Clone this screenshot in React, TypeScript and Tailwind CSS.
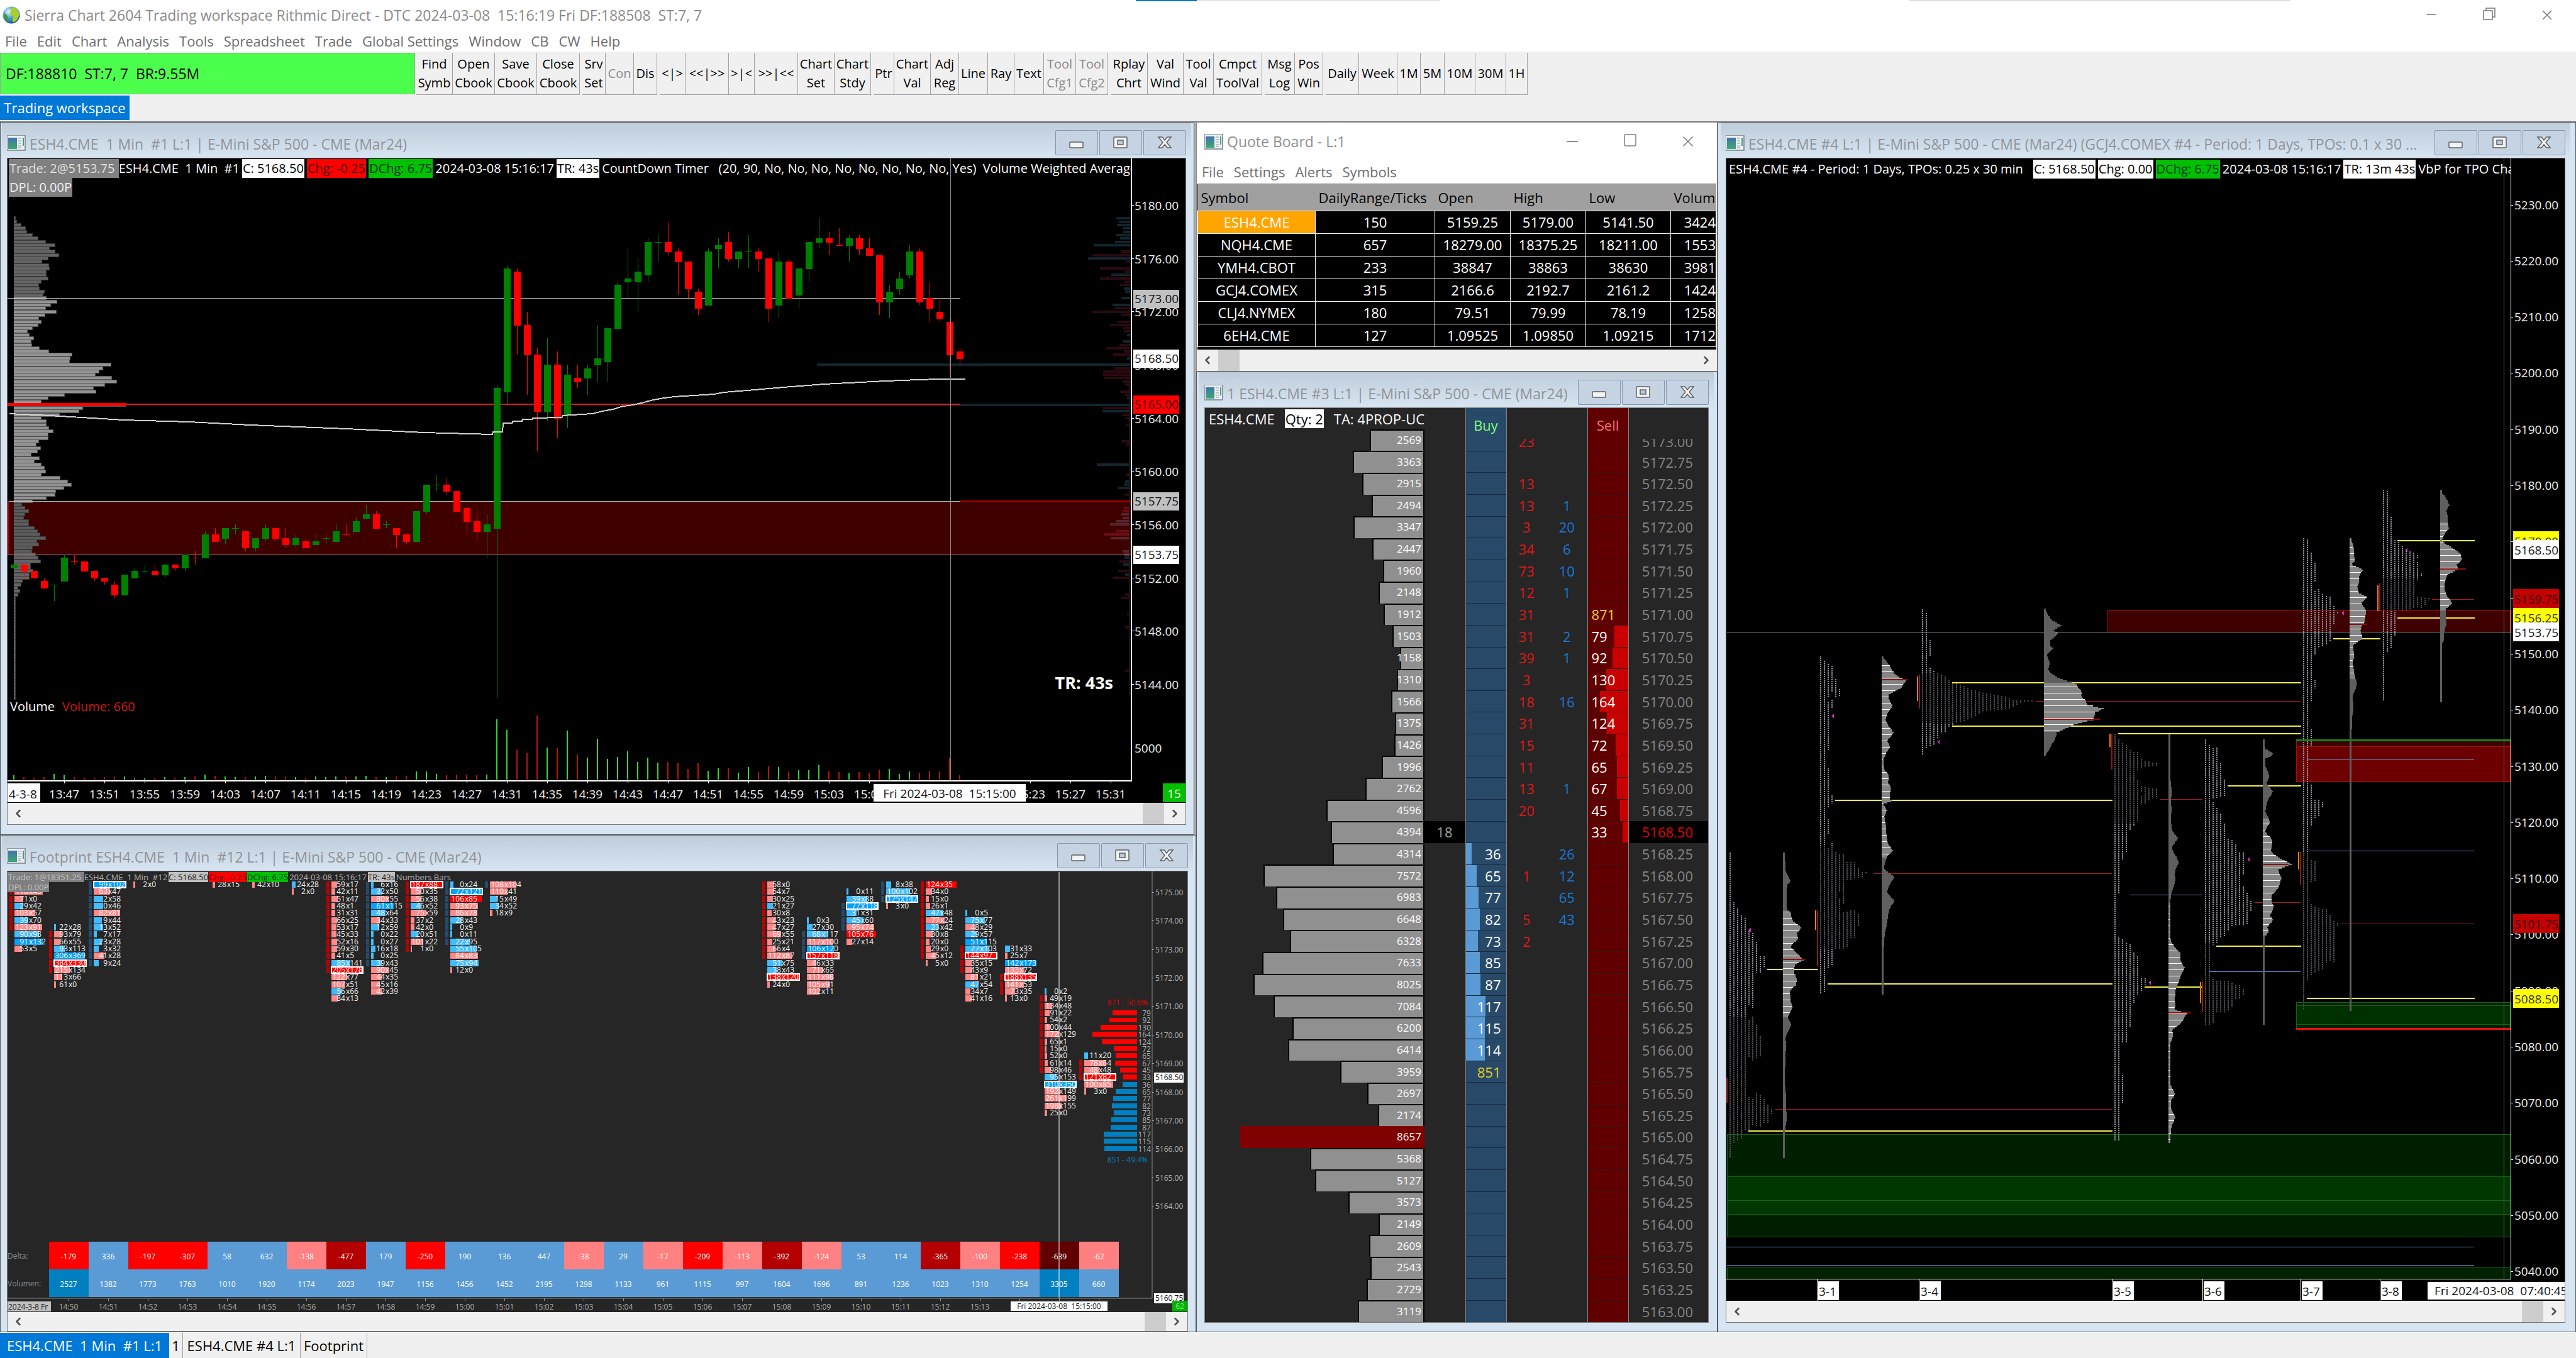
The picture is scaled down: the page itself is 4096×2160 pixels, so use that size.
import React from 'react';
import { ChevronLeft, ChevronRight, Minus, Square, X } from 'lucide-react';

/* ---------- shared chrome ---------- */

const WindowIcon: React.FC = () => (
  <svg viewBox="0 0 30 25" className="w-[30px] h-[25px] shrink-0" aria-hidden="true">
    <defs>
      <linearGradient id="winIcon" x1="0" y1="0" x2="0" y2="1">
        <stop offset="0" stopColor="#3f74a8" />
        <stop offset="1" stopColor="#3fa876" />
      </linearGradient>
    </defs>
    <rect x="0" y="0" width="30" height="25" fill="#8b98a5" />
    <rect x="1" y="1" width="27" height="22" fill="#eef1f3" />
    <rect x="2" y="4" width="14" height="18" fill="url(#winIcon)" />
    <path d="M18 5h5M18 9h5M18 13h5M18 17h5M18 20h5" stroke="#a9b3bb" strokeWidth="1.5" />
    <rect x="25" y="4" width="2" height="13" fill="#4f9a8a" />
  </svg>
);

const CaptionButton: React.FC<{ label: string; children: React.ReactNode }> = ({ label, children }) => (
  <button
    aria-label={label}
    className="w-[68px] h-10 flex items-center justify-center border border-[#8397b0] rounded-xs bg-[#c6d3e3]"
  >
    {children}
  </button>
);

const CaptionButtons: React.FC = () => (
  <div className="flex gap-[2px] shrink-0">
    <CaptionButton label="Minimize">
      <svg viewBox="0 0 24 24" className="w-6 h-6">
        <rect x="1" y="11" width="21" height="9" rx="1" fill="#f4f4f4" stroke="#5c6066" strokeWidth="1.5" />
      </svg>
    </CaptionButton>
    <CaptionButton label="Maximize">
      <svg viewBox="0 0 24 24" className="w-6 h-6">
        <rect x="1" y="3" width="21" height="17" rx="1" fill="#f4f4f4" stroke="#5c6066" strokeWidth="1.5" />
        <rect x="7" y="8" width="9" height="7" fill="#b9c9dc" stroke="#5c6066" strokeWidth="1.5" />
      </svg>
    </CaptionButton>
    <CaptionButton label="Close">
      <svg viewBox="0 0 24 24" className="w-6 h-6">
        <path
          d="M2 3h6l4 5 4-5h6l-7 8.500 7 8.500h-6l-4-5-4 5H2l7-8.500z"
          fill="#f4f4f4"
          stroke="#5c6066"
          strokeWidth="1.5"
        />
      </svg>
    </CaptionButton>
  </div>
);

const ScrollBar: React.FC<{ height: string; thumb: 'start' | 'end' }> = ({ height, thumb }) => (
  <div className={`${height} shrink-0 flex bg-[#f0f0f0] text-[#505050]`}>
    <button aria-label="Scroll left" className="w-[34px] flex items-center justify-center">
      <ChevronLeft size={20} strokeWidth={3} />
    </button>
    <div className={`flex-1 flex ${thumb === 'end' ? 'justify-end' : 'justify-start'}`}>
      <div className="w-[34px] bg-[#cdcdcd]" />
    </div>
    <button aria-label="Scroll right" className="w-[34px] flex items-center justify-center">
      <ChevronRight size={20} strokeWidth={3} />
    </button>
  </div>
);

interface WindowProps {
  title: string;
  pad: string;
  className?: string;
  children: React.ReactNode;
}

const ChartWindow: React.FC<WindowProps> = ({ title, pad, className = '', children }) => (
  <section
    className={`flex flex-col min-w-0 min-h-0 border border-[#55585c] bg-[#d7e4f2] ${pad} ${className}`}
  >
    <header className="h-14 pt-2 shrink-0 flex items-center gap-[6px] -mx-2 px-2 bg-linear-to-b from-[#bfcddb] to-[#d7e4f2]">
      <WindowIcon />
      <h2 className="flex-1 min-w-0 pt-1 truncate whitespace-pre text-[23px] text-[#8f9499]">{title}</h2>
      <CaptionButtons />
    </header>
    <div className="flex-1 min-h-0 flex flex-col border border-[#77797c] relative overflow-hidden">{children}</div>
  </section>
);

/* ---------- top of the application ---------- */

const MENU = ['File', 'Edit', 'Chart', 'Analysis', 'Tools', 'Spreadsheet', 'Trade', 'Global Settings', 'Window', 'CB', 'CW', 'Help'];

const TOOL_GROUPS: [string, string, boolean?][][] = [
  [['Find\nSymb', 'w-[58px]'], ['Open\nCbook', 'w-[67px]'], ['Save\nCbook', 'w-[67px]'], ['Close\nCbook', 'w-[68px]']],
  [['Srv\nSet', 'w-[37px]'], ['Con', 'w-[45px]', true], ['Dis', 'w-[37px]']],
  [['<|>', 'w-[41px]'], ['<<|>>', 'w-[69px]'], ['>|<', 'w-[41px]'], ['>>|<<', 'w-[69px]'], ['Chart\nSet', 'w-[58px]'], ['Chart\nStdy', 'w-[58px]']],
  [['Ptr', 'w-[33px]'], ['Chart\nVal', 'w-[58px]'], ['Adj\nReg', 'w-[45px]'], ['Line', 'w-[46px]'], ['Ray', 'w-[42px]'], ['Text', 'w-[47px]'], ['Tool\nCfg1', 'w-[51px]', true], ['Tool\nCfg2', 'w-[51px]', true]],
  [['Rplay\nChrt', 'w-[59px]'], ['Val\nWind', 'w-[57px]'], ['Tool\nVal', 'w-[48px]'], ['Cmpct\nToolVal', 'w-[77px]']],
  [['Msg\nLog', 'w-[48px]'], ['Pos\nWin', 'w-[45px]']],
  [['Daily', 'w-[53px]'], ['Week', 'w-[61px]'], ['1M', 'w-[37px]'], ['5M', 'w-[38px]'], ['10M', 'w-[49px]'], ['30M', 'w-[49px]'], ['1H', 'w-[34px]']],
];

const TitleBar: React.FC = () => (
  <header className="h-12 shrink-0 flex items-center bg-white relative">
    <svg viewBox="0 0 30 30" className="w-[30px] h-[30px] ml-[3px]" aria-hidden="true">
      <defs>
        <radialGradient id="globe" cx="0.35" cy="0.3" r="0.8">
          <stop offset="0" stopColor="#e8f6ff" />
          <stop offset="0.45" stopColor="#4fa3d9" />
          <stop offset="1" stopColor="#0c3f86" />
        </radialGradient>
      </defs>
      <circle cx="15" cy="15" r="13.500" fill="url(#globe)" />
      <path d="M13 3c6-2 12 2 14 8 1 6-2 12-7 15-4 1-4-4-2-7 1-3-5-3-5-7s4-4 2-6-4-1-2-3z" fill="#a9cf2c" />
      <path d="M3 13c2-1 5 1 6 4s1 6 2 9c-5-2-8-7-8-13z" fill="#3f9a35" />
    </svg>
    <h1 className="ml-[6px] flex-1 whitespace-pre text-[23px] text-[#8a8a8a]">
      {'Sierra Chart 2604 Trading workspace Rithmic Direct - DTC 2024-03-08  15:16:19 Fri DF:188508  ST:7, 7'}
    </h1>
    <div className="flex text-[#777]">
      <button aria-label="Minimize application" className="w-[92px] flex justify-center"><Minus size={24} strokeWidth={1.5} /></button>
      <button aria-label="Restore application" className="w-[92px] flex justify-center">
        <svg viewBox="0 0 22 22" className="w-[22px] h-[22px]" fill="none" stroke="currentColor" strokeWidth="1.5">
          <rect x="2" y="6" width="14" height="14" />
          <path d="M6 6V2h14v14h-4" />
        </svg>
      </button>
      <button aria-label="Close application" className="w-[92px] flex justify-center"><X size={26} strokeWidth={1.5} /></button>
    </div>
    {/* other windows peeking from behind the top edge */}
    <div className="absolute top-0 left-[44.1%] w-[11.8%] h-[2px] flex">
      <div className="w-1/5 bg-[#0078d7]" />
      <div className="flex-1 bg-[#e3e3e3]" />
    </div>
    <div className="absolute top-0 left-[74.1%] w-[14.800%] h-[2px] bg-[#dedede]" />
  </header>
);

const Toolbar: React.FC = () => (
  <div className="h-[70px] shrink-0 flex items-stretch bg-[#f0f0f0] pt-[2px] pb-px">
    <div className="w-[660px] mb-px mr-[2px] px-2 flex items-center border border-[#a0a0a0] bg-[#4dff4d] whitespace-pre text-[23px]">
      {'DF:188810  ST:7, 7  BR:9.55M'}
    </div>
    <div className="flex gap-1">
      {TOOL_GROUPS.map((group, g) => (
        <div key={g} className="flex border-b border-[#a0a0a0]">
          {group.map(([label, width, disabled]) => (
            <button
              key={label}
              disabled={disabled}
              className={`${width} flex items-center justify-center border-r border-[#a0a0a0] whitespace-pre text-center text-[20px] leading-[30px] text-black disabled:text-[#8a8a8a]`}
            >
              {label}
            </button>
          ))}
        </div>
      ))}
    </div>
  </div>
);

/* ---------- one minute chart ---------- */

// up/down, body top, body bottom, high, low in ticks over 5153.75, volume height
type Candle = [number, number, number, number, number, number];
const CANDLES: Candle[] = [
  [1, -3, -4, -3, -4, 7], [0, -3, -5, -3, -7, 4], [0, -5, -7, -5, -7, 3], [0, -8, -10, -7, -10, 4], [1, -9, -9, -9, -14, 9],
  [1, -1, -8, 0, -8, 7], [0, -2, -2, 0, -3, 4], [0, -2, -5, -2, -5, 3], [0, -5, -7, -5, -8, 3], [0, -7, -8, -7, -9, 4],
  [0, -9, -12, -8, -13, 4], [1, -6, -12, -6, -12, 5], [1, -5, -7, -4, -7, 2], [1, -5, -5, -3, -6, 2], [0, -5, -6, -3, -6, 3],
  [1, -3, -6, -3, -7, 4], [0, -3, -4, -3, -5, 3], [1, 0, -4, 0, -5, 4], [0, -1, -1, 1, -3, 5], [1, 6, -1, 7, -1, 8],
  [0, 6, 4, 8, 4, 6], [1, 8, 5, 8, 3, 5], [1, 8, 8, 9, 6, 4], [0, 7, 2, 7, 1, 4], [1, 5, 2, 5, 1, 5],
  [1, 8, 5, 9, 4, 6], [0, 8, 5, 8, 4, 5], [0, 5, 3, 8, 2, 4], [1, 5, 3, 6, 2, 4], [0, 4, 2, 5, 2, 3],
  [1, 4, 3, 6, 3, 5], [1, 5, 5, 6, 3, 4], [1, 7, 4, 9, 4, 5], [0, 6, 6, 9, 6, 5], [1, 10, 7, 11, 7, 5],
  [1, 12, 11, 15, 11, 6], [0, 12, 8, 13, 8, 4], [1, 9, 9, 10, 8, 4], [0, 8, 6, 8, 2, 5], [0, 6, 4, 6, 3, 6],
  [1, 13, 4, 13, 4, 13], [1, 21, 13, 21, 12, 13], [1, 21, 21, 24, 19, 9], [0, 21, 19, 23, 18, 7], [0, 19, 13, 19, 13, 7],
  [0, 14, 10, 14, 6, 8], [0, 10, 7, 13, 4, 7], [1, 9, 7, 12, -1, 8], [1, 50, 8, 51, -43, 96], [1, 86, 49, 87, 45, 79],
  [0, 85, 69, 86, 60, 47], [0, 69, 60, 73, 48, 42], [0, 60, 43, 62, 31, 102], [1, 57, 43, 65, 40, 51], [0, 57, 41, 61, 35, 50],
  [1, 54, 42, 57, 38, 78], [0, 53, 52, 57, 50, 40], [1, 56, 53, 57, 48, 35], [1, 59, 57, 69, 52, 65], [1, 68, 58, 68, 52, 33],
  [1, 81, 68, 82, 67, 36], [1, 83, 82, 92, 77, 45], [1, 85, 82, 89, 73, 28], [1, 94, 84, 95, 82, 35], [1, 94, 94, 96, 88, 27],
  [0, 94, 91, 100, 90, 28], [0, 91, 88, 92, 78, 26], [0, 88, 80, 88, 77, 17], [0, 79, 74, 80, 72, 26], [1, 91, 75, 92, 75, 14],
  [1, 93, 92, 95, 86, 18], [0, 94, 89, 97, 88, 18], [1, 91, 89, 91, 86, 11], [1, 91, 91, 96, 86, 20], [0, 91, 89, 92, 85, 12],
  [0, 89, 74, 89, 70, 21], [1, 88, 75, 91, 71, 20], [0, 88, 77, 89, 77, 12], [1, 86, 78, 86, 74, 15], [1, 94, 86, 94, 82, 15],
  [1, 95, 94, 101, 92, 23], [0, 95, 94, 97, 90, 13], [0, 93, 93, 98, 93, 12], [1, 95, 93, 96, 88, 10], [0, 95, 92, 96, 90, 12],
  [0, 92, 90, 95, 90, 11], [0, 90, 76, 90, 72, 16], [1, 79, 76, 81, 71, 17], [1, 83, 80, 85, 78, 9], [1, 91, 84, 93, 83, 13],
  [0, 91, 76, 92, 75, 11], [0, 77, 74, 82, 70, 14], [0, 73, 71, 77, 70, 13], [0, 70, 60, 71, 54, 34], [0, 61, 59, 62, 57, 7],
];

const VBP = [
  2, 4, 11, 18, 20, 29, 38, 50, 65, 56, 65, 71, 54, 44, 55, 56, 51, 51, 54, 43, 39, 40, 48, 46, 51, 68, 58, 50, 67, 49,
  39, 43, 38, 29, 21, 24, 31, 27, 28, 40, 55, 92, 89, 88, 154, 141, 135, 129, 155, 163, 144, 126, 130, 80, 54, 43, 178,
  109, 103, 72, 43, 51, 51, 55, 62, 54, 54, 39, 35, 42, 37, 27, 40, 32, 43, 48, 50, 43, 73, 85, 91, 79, 66, 65, 51, 29,
  12, 17, 23, 17, 15, 23, 23, 32, 37, 41, 50, 36, 39, 29, 28, 34, 38, 42, 26, 26, 30, 24, 24, 13, 11, 6, 9, 6, 2, 2, 2,
  2, 2, 2, 2, 2, 2, 2, 2, 2, 2, 2, 2, 2, 2, 2, 2, 2, 2, 2, 2, 2, 2, 2, 2, 2, 2, 2, 2,
];

// tick, width, 1 = bid side
const DEPTH: [number, number, number][] = [
  [101, 22, 1], [100, 18, 1], [99, 21, 1], [98, 11, 1], [97, 12, 1], [96, 23, 1], [95, 16, 1], [94, 24, 1], [93, 57, 1],
  [91, 15, 0], [90, 60, 0], [89, 67, 1], [88, 7, 0], [86, 48, 0], [85, 8, 0], [84, 30, 1], [83, 48, 0], [82, 9, 0],
  [81, 16, 0], [80, 10, 1], [79, 8, 1], [77, 14, 1], [75, 28, 1], [74, 24, 0], [73, 61, 0], [72, 14, 0], [70, 20, 0],
  [69, 32, 0], [68, 12, 0], [67, 10, 0], [66, 5, 1], [64, 11, 1], [63, 17, 0], [62, 38, 0], [61, 10, 0], [60, 27, 0],
  [59, 5, 1], [57, 498, 1], [56, 25, 0], [55, 43, 0], [54, 43, 0], [53, 41, 0], [52, 12, 0], [51, 8, 0], [49, 16, 0],
  [48, 8, 0], [47, 5, 1], [45, 757, 1], [44, 44, 0], [43, 44, 1], [42, 13, 0], [41, 6, 0], [39, 7, 0], [34, 14, 0],
  [33, 7, 0], [27, 53, 1], [24, 6, 0], [22, 8, 1], [21, 10, 1], [20, 19, 1], [18, 9, 0], [14, 10, 2], [13, 12, 2],
  [12, 14, 3], [11, 12, 3], [10, 22, 3], [9, 32, 3], [7, 23, 2], [6, 41, 2], [5, 31, 3], [1, 12, 3], [0, 9, 3],
  [-1, 9, 1], [-2, 17, 0], [-3, 11, 1], [-5, 19, 0], [-6, 8, 1], [-7, 28, 0], [-12, 8, 0], [-13, 14, 0], [-18, 5, 0],
  [-22, 8, 0], [-35, 8, 0],
];
const DEPTH_FILL = ['#2a0a10', '#13252e', '#6b0c14', '#57262c'];

const VWAP =
  '15,658 80,661 196,668 300,671 398,676 551,682 674,688 783,691 784,687 799,687 800,673 814,673 816,670 830,670 831,667 846,667 847,665 893,664 895,661 925,659 942,658 958,654 975,651 991,646 1007,644 1024,640 1039,636 1056,633 1072,631 1087,630 1135,627 1151,624 1200,620 1246,616 1310,611 1369,608 1408,606 1460,604 1494,603 1535,603';

const tickY = (t: number) => 882 - t * 5.2925;

const PriceTag: React.FC<{ x: number; y: number; w: number; h: number; bg: string; fg: string; text: string }> = ({ x, y, w, h, bg, fg, text }) => (
  <g>
    <rect x={x} y={y - h / 2} width={w} height={h} fill={bg} />
    <text x={x + 2} y={y + h / 4} fill={fg}>{text}</text>
  </g>
);

const MinuteChart: React.FC = () => {
  // labels under the cursor's date box are left out
  const times = Array.from({ length: 27 }, (_, i) => {
    const m = 13 * 60 + 47 + i * 4;
    return { x: 102 + i * 64, label: `${Math.floor(m / 60)}:${String(m % 60).padStart(2, '0')}` };
  }).filter(t => t.x < 1400 || t.x > 1620);
  return (
    <svg viewBox="12 252 1873 1025" preserveAspectRatio="none" className="block w-full flex-1 min-h-0 bg-black text-[19px]" shapeRendering="crispEdges">
      <rect x={13} y={797} width={1785} height={85} fill="#3f0000" />
      {VBP.map((w, i) => {
        const t = 101 - i;
        const poc = t === 45;
        const inside = t <= 77 && t >= 16;
        return (
          <g key={i}>
            <rect x={22} y={tickY(t) - 3} width={w + 1} height={6} fill={inside ? '#555' : '#3c3c3c'} />
            <rect x={22} y={tickY(t) - 2} width={w} height={4} fill={poc ? '#f00' : inside ? '#939393' : '#646464'} opacity={t < 16 && t > 0 ? 0.8 : 1} />
          </g>
        );
      })}
      {DEPTH.map(([t, w, side]) => (
        <rect key={t} x={1797 - w} y={tickY(t) - 2} width={w} height={4} fill={DEPTH_FILL[side]} />
      ))}
      <path d="M1796 600V1108" stroke="#1c1416" strokeWidth={2} />
      <path d="M12 474H1527M12 797H1527" stroke="#b8b8b8" strokeWidth={1} />
      <path d="M1527 797H1798M13 797V882" stroke="#a80000" strokeWidth={2} />
      <path d="M12 882H1798" stroke="#9c6e6e" strokeWidth={1} />
      <path d="M12 643H1527" stroke="#e01818" strokeWidth={2} />
      <path d="M12 643H200" stroke="#f00" strokeWidth={5} />
      {CANDLES.map(([up, top, bot, hi, lo, vol], i) => {
        const x = 22 + i * 16;
        const fill = up ? '#008000' : '#ff0000';
        return (
          <g key={i}>
            <rect x={x} y={tickY(hi)} width={1} height={tickY(lo) - tickY(hi)} fill={fill} />
            <rect x={x - 5} y={tickY(top)} width={11} height={Math.max(1, tickY(bot) - tickY(top) + (top === bot ? 0 : 1))} fill={fill} />
            <rect x={x - 1} y={1240 - vol} width={2} height={vol} fill={up ? '#37d637' : '#b81414'} />
          </g>
        );
      })}
      <polyline points={VWAP} fill="none" stroke="#cfcfcf" strokeWidth={2} />
      <path d="M1511 252V1242" stroke="#8a8a8a" strokeWidth={1} />
      <path d="M12 1242H1799V252" fill="none" stroke="#fff" strokeWidth={2} />
      {times.map(t => (
        <g key={t.label}>
          <rect x={t.x} y={1242} width={1} height={4} fill="#fff" />
          <text x={t.x} y={1270} textAnchor="middle" fill="#f2f2f2">{t.label}</text>
        </g>
      ))}
      {Array.from({ length: 10 }, (_, i) => 5180 - i * 4).map(p => (
        <g key={p}>
          <rect x={1799} y={326 + (5180 - p) * 21.17} width={4} height={1} fill="#fff" />
          <text x={1804} y={334 + (5180 - p) * 21.17} fill="#f2f2f2">{p.toFixed(2)}</text>
        </g>
      ))}
      <text x={1804} y={1197} fill="#f2f2f2">5000</text>
      <PriceTag x={1802} y={475} w={73} h={29} bg="#c0c0c0" fg="#111" text="5173.00" />
      <PriceTag x={1802} y={570} w={73} h={29} bg="#fff" fg="#111" text="5168.50" />
      <PriceTag x={1802} y={643} w={73} h={29} bg="#f00" fg="#400" text="5165.00" />
      <PriceTag x={1802} y={797} w={73} h={29} bg="#c0c0c0" fg="#111" text="5157.75" />
      <PriceTag x={1802} y={882} w={73} h={29} bg="#fff" fg="#111" text="5153.75" />
      <text x={16} y={1131} fill="#fff" className="text-[20px]">Volume</text>
      <text x={99} y={1131} fill="#d01818" className="text-[20px]">Volume: 660</text>
      <text x={1770} y={1096} textAnchor="end" fill="#fff" className="text-[27px] font-bold">TR: 43s</text>
      <rect x={12} y={1246} width={52} height={30} fill="#fff" />
      <text x={14} y={1270} fill="#111">4-3-8</text>
      <rect x={1389} y={1247} width={242} height={28} fill="#fff" />
      <text x={1510} y={1269} textAnchor="middle" fill="#111">{'Fri 2024-03-08\u00a0\u00a015:15:00'}</text>
      <rect x={1849} y={1246} width={36} height={30} fill="#00c000" />
      <text x={1867} y={1269} textAnchor="middle" fill="#fff">15</text>
    </svg>
  );
};

/* ---------- footprint chart ---------- */

// bid, ask, bar width, colour: p/b light, R/B strong, trailing o marks the point of control
type Cell = [number, number, number, string];
interface Bar { k: number; row: number; strip?: [string, number, number]; cells: Cell[] }

const BARS: Bar[] = [
  { k: -1, row: 1, strip: ['r', 1, 6], cells: [[118, 49, 45, 'p'], [71, 0, 14, 'p'], [29, 42, 14, 'b'], [103, 57, 33, 'p'], [39, 70, 22, 'b'], [123, 91, 44, 'p'], [90, 98, 39, 'b'], [91, 132, 45, 'B'], [53, 5, 12, 'p']] },
  { k: 0, row: 6, strip: ['r', 7, 12], cells: [[22, 28, 3, 'b'], [93, 79, 12, 'p'], [66, 55, 9, 'p'], [93, 113, 17, 'b'], [306, 369, 49, 'B'], [384, 330, 51, 'Ro'], [215, 134, 25, 'p'], [113, 66, 13, 'p'], [61, 0, 3, 'p']] },
  { k: 1, row: 0, strip: ['n', 0, 11], cells: [[99, 102, 51, 'Bo'], [63, 47, 26, 'p'], [2, 58, 15, 'b'], [0, 46, 15, 'b'], [82, 81, 42, 'p'], [9, 44, 13, 'b'], [13, 52, 15, 'b'], [7, 17, 5, 'b'], [23, 28, 13, 'b'], [3, 32, 8, 'b'], [41, 28, 17, 'p'], [9, 24, 8, 'b']] },
  { k: 2, row: 0, cells: [[2, 0, 3, 'p']] },
  { k: 4, row: 0, cells: [[28, 15, 4, 'p']] },
  { k: 5, row: 0, cells: [[42, 10, 4, 'p']] },
  { k: 6, row: 0, cells: [[24, 28, 6, 'b'], [2, 0, 3, 'p']] },
  { k: 7, row: 0, strip: ['r', 0, 12], cells: [[59, 17, 9, 'p'], [42, 11, 6, 'p'], [51, 47, 10, 'p'], [48, 1, 6, 'p'], [31, 31, 6, 'p'], [66, 25, 9, 'p'], [53, 17, 8, 'p'], [45, 33, 8, 'p'], [52, 16, 9, 'p'], [59, 30, 9, 'p'], [41, 5, 6, 'p'], [85, 141, 30, 'b'], [205, 178, 50, 'Ro'], [122, 77, 25, 'p'], [107, 51, 22, 'p'], [56, 66, 16, 'b'], [84, 13, 11, 'p']] },
  { k: 8, row: 0, strip: ['n', 0, 11], cells: [[6, 16, 4, 'b'], [32, 50, 17, 'b'], [80, 55, 28, 'p'], [61, 115, 36, 'B'], [48, 64, 23, 'b'], [34, 33, 14, 'p'], [12, 59, 13, 'b'], [0, 22, 4, 'b'], [0, 27, 4, 'b'], [16, 18, 7, 'b'], [0, 25, 4, 'b'], [39, 43, 17, 'b'], [90, 45, 28, 'p'], [44, 35, 17, 'p'], [45, 16, 14, 'p'], [42, 39, 17, 'p']] },
  { k: 9, row: 0, strip: ['r', 0, 9], cells: [[187, 88, 51, 'Ro'], [50, 35, 16, 'p'], [56, 38, 17, 'p'], [46, 52, 17, 'b'], [75, 59, 25, 'p'], [37, 2, 6, 'p'], [42, 0, 6, 'p'], [20, 51, 12, 'b'], [101, 22, 20, 'p'], [1, 0, 2, 'p']] },
  { k: 10, row: 0, strip: ['n', 0, 8], cells: [[0, 24, 5, 'b'], [72, 121, 51, 'Bo'], [106, 85, 50, 'R'], [93, 75, 44, 'p'], [86, 78, 43, 'p'], [28, 43, 18, 'b'], [0, 9, 3, 'b'], [0, 11, 3, 'b'], [22, 95, 31, 'b'], [55, 105, 42, 'b'], [84, 83, 44, 'p'], [75, 94, 45, 'b'], [12, 0, 3, 'p']] },
  { k: 11, row: 0, strip: ['n', 0, 0], cells: [[108, 104, 42, 'p'], [110, 41, 28, 'p'], [15, 49, 11, 'b'], [34, 52, 14, 'b'], [18, 9, 4, 'p']] },
  { k: 18, row: 0, strip: ['r', 0, 10], cells: [[58, 0, 11, 'p'], [54, 7, 11, 'p'], [30, 25, 9, 'p'], [21, 27, 9, 'b'], [30, 8, 7, 'p'], [43, 23, 12, 'p'], [47, 27, 12, 'p'], [69, 55, 22, 'p'], [25, 21, 8, 'p'], [66, 4, 13, 'p'], [112, 87, 39, 'p'], [51, 75, 24, 'b'], [38, 43, 15, 'b'], [138, 120, 51, 'Ro'], [24, 0, 4, 'p']] },
  { k: 19, row: 5, strip: ['n', 7, 10], cells: [[0, 3, 3, 'b'], [27, 30, 9, 'b'], [68, 117, 33, 'b'], [117, 100, 41, 'p'], [106, 120, 43, 'B'], [157, 118, 51, 'Ro'], [46, 33, 15, 'p'], [71, 65, 26, 'p'], [111, 98, 42, 'p'], [105, 91, 37, 'p'], [102, 11, 20, 'p']] },
  { k: 20, row: 1, strip: ['n', 3, 6], cells: [[0, 11, 3, 'b'], [39, 88, 33, 'b'], [77, 118, 50, 'Bo'], [31, 31, 16, 'b'], [45, 60, 27, 'b'], [95, 74, 44, 'p'], [105, 76, 47, 'R'], [27, 14, 9, 'p']] },
  { k: 21, row: 0, strip: ['n', 0, 2], cells: [[8, 38, 8, 'b'], [100, 102, 38, 'b'], [125, 147, 50, 'Bo'], [3, 0, 3, 'p']] },
  { k: 22, row: 0, strip: ['r', 0, 10], cells: [[124, 35, 49, 'R'], [34, 0, 10, 'p'], [15, 0, 5, 'p'], [26, 1, 7, 'p'], [47, 48, 28, 'b'], [77, 24, 30, 'p'], [23, 42, 20, 'b'], [30, 8, 11, 'p'], [20, 0, 6, 'p'], [29, 0, 8, 'p'], [45, 12, 17, 'p'], [5, 0, 3, 'p']] },
  { k: 23, row: 4, strip: ['r', 9, 12], cells: [[0, 5, 3, 'b'], [75, 77, 31, 'b'], [48, 29, 16, 'p'], [29, 57, 18, 'b'], [51, 115, 34, 'B'], [77, 103, 38, 'b'], [144, 97, 50, 'Ro'], [35, 15, 10, 'p'], [43, 9, 11, 'p'], [81, 21, 20, 'p'], [47, 54, 21, 'b'], [34, 7, 8, 'p'], [41, 16, 10, 'p']] },
  { k: 24, row: 9, strip: ['r', 13, 15], cells: [[31, 33, 8, 'b'], [25, 7, 4, 'p'], [142, 173, 50, 'B'], [133, 72, 31, 'p'], [188, 135, 50, 'Ro'], [141, 53, 30, 'p'], [73, 35, 16, 'p'], [13, 0, 3, 'p']] },
  { k: 25, row: 15, strip: ['r', 16, 26], cells: [[0, 2, 3, 'b'], [49, 19, 4, 'p'], [134, 48, 12, 'p'], [91, 22, 8, 'p'], [54, 2, 4, 'p'], [100, 44, 9, 'p'], [172, 129, 23, 'p'], [65, 1, 4, 'p'], [15, 0, 3, 'p'], [52, 0, 4, 'p'], [61, 14, 5, 'p'], [98, 46, 10, 'p'], [95, 153, 19, 'b'], [310, 350, 50, 'Bo'], [192, 149, 24, 'p'], [261, 199, 35, 'p'], [198, 155, 27, 'p'], [25, 0, 4, 'p']] },
  { k: 26, row: 24, strip: ['r', 25, 27], cells: [[11, 20, 6, 'b'], [78, 64, 35, 'p'], [48, 48, 24, 'p'], [121, 82, 50, 'Ro'], [100, 85, 46, 'p'], [3, 0, 3, 'p']] },
];

const CELL_FILL: Record<string, string> = { p: '#ff8888', b: '#42bcff', R: '#ff0000', B: '#00a2ff' };
const DELTAS = [-179, 336, -197, -307, 58, 632, -138, -477, 179, -250, 190, 136, 447, -38, 29, -17, -209, -113, -392, -124, 53, 114, -365, -100, -238, -639, -62];
const VOLUMES = [2527, 1382, 1773, 1763, 1010, 1920, 1174, 2023, 1947, 1156, 1456, 1452, 2195, 1298, 1133, 961, 1115, 997, 1604, 1696, 891, 1236, 1023, 1310, 1254, 3305, 660];
const BOOK = [79, 92, 130, 164, 124, 72, 65, 67, 45, 33, 36, 65, 77, 82, 73, 85, 87, 117, 115, 114];

const deltaFill = (d: number) => {
  if (d >= 0) return '#5b9bd5';
  if (d < -600) return '#600000';
  if (d < -350) return '#b40000';
  if (d < -150) return '#ff0000';
  return '#ff8080';
};

const rowY = (r: number) => 1407 + r * 11.36;

const FootprintChart: React.FC = () => (
  <svg viewBox="12 1386 1876 702" preserveAspectRatio="none" className="block w-full flex-1 min-h-0 bg-[#262626] text-[12px]" shapeRendering="crispEdges">
    {BARS.map(({ k, row, strip, cells }) => {
      const left = 78 + k * 63;
      return (
        <g key={k}>
          {strip && Array.from({ length: strip[2] - strip[1] + 1 }, (_, i) => (
            <rect key={i} x={left} y={rowY(strip[1] + i) - 5} width={5} height={10} fill={strip[0] === 'r' ? '#c00000' : '#264a6c'} />
          ))}
          {cells.map(([bid, ask, w, c], i) => {
            const y = rowY(row + i);
            const poc = c.length > 1;
            return (
              <g key={i}>
                <rect x={left + 8} y={y - 5} width={w} height={10} fill={CELL_FILL[c[0]]} stroke={poc ? '#fff' : 'none'} strokeWidth={poc ? 2 : 0} />
                <text x={left + 30} y={y + 4} textAnchor="end" fill="#f4f4f4">{bid}</text>
                <text x={left + 31} y={y + 4} fill="#f4f4f4">{`x${ask}`}</text>
              </g>
            );
          })}
        </g>
      );
    })}
    {BOOK.map((v, i) => {
      const w = 10 + v * 0.37;
      return (
        <g key={i}>
          <rect x={1808 - w} y={rowY(18 + i) - 4} width={w} height={8} fill={i < 10 ? '#ff0000' : '#0080c0'} />
          <text x={1830} y={rowY(18 + i) + 5} textAnchor="end" fill="#b4b4b4">{v}</text>
        </g>
      );
    })}
    <text x={1825} y={1599} textAnchor="end" fill="#e00000">871 - 50.6%</text>
    <text x={1825} y={1850} textAnchor="end" fill="#0080c0">851 - 49.4%</text>
    <text x={12} y={2003} fill="#8c8c8c">Delta:</text>
    <text x={12} y={2047} fill="#8c8c8c">Volumen:</text>
    {DELTAS.map((d, k) => (
      <g key={k}>
        <rect x={78 + k * 63} y={1976} width={63} height={44} fill={deltaFill(d)} />
        <rect x={78 + k * 63} y={2020} width={63} height={44} fill={VOLUMES[k] > 2500 ? '#0080c0' : '#5b9bd5'} />
        <text x={109 + k * 63} y={2004} textAnchor="middle" fill="#fff">{d}</text>
        <text x={109 + k * 63} y={2048} textAnchor="middle" fill="#fff">{VOLUMES[k]}</text>
        <rect x={109 + k * 63} y={2066} width={1} height={4} fill="#9a9a9a" />
        {k < 24 && (
          <text x={109 + k * 63} y={2084} textAnchor="middle" fill="#b0b0b0">
            {k < 10 ? `14:${50 + k}` : `15:${String(k - 10).padStart(2, '0')}`}
          </text>
        )}
      </g>
    ))}
    <path d="M1684 1387V2066" stroke="#fff" strokeWidth={1} />
    <path d="M12 2066H1832V1386" fill="none" stroke="#8a8a8a" strokeWidth={1} />
    {Array.from({ length: 12 }, (_, i) => 5175 - i).map(p => (
      <g key={p}>
        <rect x={1832} y={1419 + (5175 - p) * 45.45} width={3} height={1} fill="#9a9a9a" />
        <text x={1837} y={1424 + (5175 - p) * 45.45} fill="#b4b4b4">{p.toFixed(2)}</text>
      </g>
    ))}
    <PriceTag x={1835} y={1714} w={47} h={16} bg="#fff" fg="#111" text="5168.50" />
    <PriceTag x={1835} y={2066} w={47} h={16} bg="#fff" fg="#111" text="5160.75" />
    <rect x={12} y={2071} width={69} height={16} fill="#c0c0c0" />
    <text x={13} y={2084} fill="#222">2024-3-8 Fr</text>
    <rect x={1607} y={2071} width={154} height={15} fill="#fff" />
    <text x={1684} y={2083} textAnchor="middle" fill="#222">{'Fri 2024-03-08\u00a0\u00a015:15:00'}</text>
    <rect x={1864} y={2070} width={24} height={17} fill="#00b400" />
    <text x={1876} y={2083} textAnchor="middle" fill="#8fe08f">62</text>
  </svg>
);

/* ---------- market profile chart ---------- */

interface Profile { x: number; light: [number, number]; poc: [number, number]; shape: number[] }

// shape is y, width, y, width ...
const PROFILES: Profile[] = [
  { x: 2835, light: [1449, 1617], poc: [1526, 36], shape: [1356, 3, 1381, 4, 1400, 11, 1407, 6, 1419, 7, 1445, 5, 1451, 13, 1464, 18, 1474, 27, 1483, 20, 1493, 27, 1505, 12, 1518, 22, 1526, 33, 1534, 22, 1547, 17, 1566, 22, 1576, 12, 1592, 11, 1603, 16, 1617, 8, 1630, 12, 1649, 5, 1674, 4, 1719, 3, 1770, 6, 1783, 5, 1802, 3, 1842, 3] },
  { x: 2992, light: [1057, 1362], poc: [1081, 41], shape: [1044, 2, 1057, 11, 1065, 17, 1075, 29, 1081, 41, 1085, 33, 1094, 27, 1104, 12, 1110, 13, 1121, 17, 1132, 9, 1145, 7, 1164, 17, 1177, 9, 1187, 16, 1196, 7, 1209, 2, 1222, 4, 1231, 11, 1244, 9, 1254, 16, 1270, 13, 1273, 17, 1278, 2, 1289, 8, 1298, 5, 1324, 7, 1343, 12, 1352, 16, 1362, 8, 1381, 4, 1394, 18, 1407, 14, 1419, 9, 1432, 18, 1445, 14, 1464, 8, 1490, 5, 1509, 3, 1581, 2] },
  { x: 3250, light: [1086, 1163], poc: [1144, 89], shape: [968, 2, 979, 7, 986, 13, 994, 32, 1002, 16, 1006, 22, 1018, 9, 1027, 11, 1030, 17, 1040, 5, 1053, 8, 1065, 7, 1072, 16, 1081, 33, 1085, 45, 1093, 49, 1100, 60, 1113, 74, 1120, 67, 1126, 85, 1132, 74, 1144, 88, 1152, 51, 1158, 33, 1164, 18, 1177, 17, 1187, 12, 1193, 7, 1201, 2] },
  { x: 3448, light: [1436, 1817], poc: [1611, 35], shape: [1168, 2, 1232, 3, 1251, 4, 1264, 5, 1296, 4, 1321, 6, 1333, 14, 1347, 6, 1372, 15, 1391, 11, 1404, 9, 1436, 2, 1462, 1, 1493, 3, 1516, 17, 1525, 18, 1538, 29, 1551, 17, 1570, 14, 1589, 9, 1605, 11, 1611, 34, 1618, 26, 1627, 17, 1637, 6, 1647, 8, 1659, 3, 1691, 2, 1723, 3, 1739, 10, 1749, 4, 1760, 4, 1775, 10, 1790, 5, 1808, 3, 1817, 2] },
  { x: 3598, light: [1302, 1487], poc: [1375, 41], shape: [1176, 1, 1190, 4, 1199, 19, 1206, 5, 1219, 4, 1235, 11, 1245, 6, 1257, 15, 1270, 9, 1289, 4, 1302, 9, 1308, 11, 1321, 4, 1334, 13, 1353, 15, 1363, 26, 1374, 41, 1382, 24, 1395, 34, 1404, 26, 1423, 15, 1439, 17, 1455, 11, 1463, 18, 1474, 8, 1481, 9, 1490, 2, 1630, 2] },
  { x: 3736, light: [856, 1079], poc: [993, 28], shape: [856, 2, 865, 5, 881, 8, 891, 9, 897, 3, 905, 19, 916, 16, 926, 17, 932, 12, 942, 13, 949, 28, 958, 22, 967, 26, 980, 22, 990, 24, 996, 22, 1002, 19, 1015, 18, 1025, 6, 1041, 8, 1053, 4, 1073, 9, 1085, 11, 1104, 6, 1117, 6, 1143, 4, 1175, 3, 1194, 3, 1206, 2, 1607, 2] },
  { x: 3880, light: [830, 970], poc: [905, 41], shape: [779, 1, 792, 9, 803, 16, 811, 11, 830, 11, 840, 15, 846, 9, 859, 2, 865, 9, 872, 21, 880, 37, 888, 38, 897, 24, 905, 26, 913, 13, 926, 8, 935, 6, 945, 9, 951, 15, 959, 22, 967, 9, 980, 8, 993, 11, 1006, 6, 1018, 5, 1025, 2, 1116, 2] },
];

// TPO letter columns, 6px apart; every column is a list of y ranges
const TPOS: { x: number; dark: [number, number]; cols: number[][] }[] = [
  { x: 2751, dark: [1617, 1842], cols: [[1356, 1842], [1435, 1818], [1445, 1815], [1456, 1811], [1460, 1799], [1480, 1598, 1623, 1681, 1745, 1799], [1484, 1604, 1617, 1687, 1748, 1789], [1498, 1547, 1630, 1684, 1738, 1792], [1521, 1547, 1648, 1681, 1742, 1792], [1521, 1540, 1748, 1786], [1757, 1786], [1764, 1773]] },
  { x: 2895, dark: [1345, 1510], cols: [[1044, 1581], [1051, 1579], [1056, 1110, 1116, 1193, 1222, 1285, 1303, 1327, 1349, 1540], [1059, 1100, 1113, 1126, 1265, 1278, 1341, 1537], [1080, 1110, 1355, 1509], [1096, 1108, 1359, 1419, 1429, 1509], [1359, 1438, 1451, 1509], [1371, 1400, 1450, 1507], [1371, 1400, 1448, 1493], [1371, 1397, 1448, 1493], [1380, 1397, 1454, 1473], [1387, 1397], [1387, 1390]] },
  { x: 3057, dark: [1070, 1150], cols: [[969, 1201], [975, 1190], [1018, 1043, 1062, 1187], [1067, 1185], [1070, 1174], [1073, 1166], [1076, 1164], [1082, 1156], [1086, 1153], [1087, 1150], [1090, 1148], [1091, 1147], [1094, 1145], [1097, 1142], [1098, 1139], [1100, 1135], [1102, 1133], [1103, 1131], [1104, 1131], [1105, 1130], [1106, 1130], [1107, 1129], [1108, 1128], [1110, 1128], [1113, 1125], [1114, 1121], [1114, 1118], [1114, 1117], [1114, 1116], [1114, 1116]] },
  { x: 3363, dark: [1167, 1310], cols: [[1167, 1815], [1176, 1421, 1491, 1815], [1182, 1368, 1494, 1658, 1710, 1755], [1185, 1356, 1500, 1658], [1193, 1320, 1502, 1633], [1196, 1314, 1515, 1595], [1196, 1225, 1241, 1308, 1521, 1582], [1207, 1222, 1250, 1260, 1266, 1279, 1556, 1576], [1211, 1220, 1252, 1278, 1556, 1566], [1211, 1220, 1253, 1273], [1213, 1219, 1254, 1270], [1213, 1219, 1254, 1270]] },
  { x: 3507, dark: [1500, 1630], cols: [[1176, 1630], [1185, 1630], [1190, 1270, 1276, 1505, 1557, 1627], [1189, 1270, 1285, 1500, 1560, 1611], [1214, 1267, 1294, 1492, 1560, 1611], [1240, 1266, 1310, 1489, 1560, 1611], [1334, 1481, 1560, 1608], [1336, 1474, 1563, 1602], [1343, 1471, 1567, 1589], [1356, 1471, 1567, 1589], [1356, 1391, 1410, 1471, 1573, 1583], [1420, 1471], [1433, 1449]] },
  { x: 3663, dark: [1355, 1607], cols: [[856, 1607], [858, 1560], [879, 1117, 1160, 1187, 1248, 1313, 1368, 1404, 1438, 1551], [895, 926, 940, 1041, 1082, 1095, 1272, 1302, 1369, 1401, 1442, 1548], [937, 1031, 1272, 1299, 1444, 1544], [945, 1029, 1276, 1284, 1446, 1541], [948, 1025, 1446, 1532], [949, 1021, 1455, 1528], [964, 994, 1465, 1530], [973, 977, 1468, 1473]] },
  { x: 3790, dark: [920, 972], cols: [[779, 1114], [781, 1037], [822, 1031], [859, 1012], [862, 970], [868, 972], [873, 970], [877, 970], [879, 967], [883, 888, 894, 923, 949, 967], [912, 916, 950, 967], [951, 963], [951, 955]] },
];

// x1, x2, y
const YELLOW = [[2918, 3359, 1273], [2810, 2891, 1542], [2906, 3359, 1565], [2780, 3359, 1799], [3104, 3659, 1086], [3104, 3659, 1155], [3368, 3659, 1167], [3410, 3501, 1570], [3542, 3659, 1250], [3524, 3659, 1505], [3668, 3935, 1588], [3710, 3785, 1016], [3812, 3935, 860], [3812, 3935, 983]];
const REDS = [[3237, 3658, 1115], [2979, 3358, 1389], [2823, 3358, 1764], [3435, 3502, 1271], [3585, 3658, 1435], [3723, 3934, 1469], [3867, 3934, 953]];
const BLUES = [[3387, 3502, 1423], [3513, 3658, 1545], [3669, 3934, 1208], [3669, 3934, 1353], [2746, 3934, 1983], [2746, 3934, 2012]];
// x, orange top, orange bottom, dark red top, dark red bottom
const OPENINGS = [[2886, 1448, 1479, 1448, 1537], [3048, 1076, 1115, 1073, 1127], [3354, 1167, 1188, 1167, 1224], [3498, 1562, 1595, 1562, 1610], [3654, 1355, 1383, 1355, 1407], [3780, 931, 972, 928, 972]];
const MARKERS = [[2782, 1479], [2914, 1139], [3082, 1180], [3418, 1563], [3575, 1367], [3725, 975], [3826, 875]];
const DAYS: [number, string][] = [[2889, '3-1'], [3051, '3-4'], [3358, '3-5'], [3502, '3-6'], [3658, '3-7'], [3784, '3-8']];

const widthAt = (shape: number[], y: number) => {
  for (let i = 0; i + 3 < shape.length; i += 2) {
    if (y <= shape[i + 2]) {
      const f = (y - shape[i]) / (shape[i + 2] - shape[i]);
      return shape[i + 1] + (shape[i + 3] - shape[i + 1]) * f;
    }
  }
  return 2;
};

const VolumeProfile: React.FC<{ profile: Profile }> = ({ profile }) => {
  const { x, light, poc, shape } = profile;
  const rows: React.ReactNode[] = [];
  const end = shape[shape.length - 2];
  for (let y = shape[0], i = 0; y < end; y += 2, i++) {
    const base = widthAt(shape, y);
    const w = Math.round(base > 4 ? base * (1 + 0.12 * Math.sin(i * 12.9)) : base);
    const inside = y >= light[0] && y <= light[1];
    rows.push(<rect key={i} x={x} y={y} width={Math.max(3, w)} height={2} fill={inside ? '#858585' : '#5f5f5f'} />);
    if (inside && i % 5 === 2) {
      rows.push(<rect key={`t${i}`} x={x} y={y} width={Math.max(2, w)} height={1} fill="#fff" />);
    }
  }
  return (
    <g>
      {rows}
      <rect x={x} y={poc[0] - 1} width={poc[1]} height={2} fill="#8b0f0f" />
    </g>
  );
};

const ProfileChart: React.FC = () => {
  const y = (p: number) => 772 + (5180 - p) * 8.93;
  return (
    <svg viewBox="2745 252 1333 1817" preserveAspectRatio="none" className="block w-full flex-1 min-h-0 bg-black text-[19px]" shapeRendering="crispEdges">
      <g stroke="#126312" strokeWidth={1}>
        <rect x={2746} y={1804} width={1246} height={67} fill="#001e00" />
        <rect x={2746} y={1871} width={1246} height={38} fill="#003600" />
        <rect x={2746} y={1909} width={1246} height={22} fill="#003600" />
        <rect x={2746} y={1931} width={1246} height={36} fill="#001e00" />
        <rect x={2746} y={2016} width={1246} height={18} fill="#002200" />
        <rect x={3651} y={1594} width={340} height={42} fill="#001e00" />
        <rect x={3651} y={1599} width={340} height={30} fill="#003000" />
      </g>
      <rect x={3351} y={970} width={640} height={35} fill="#3f0000" stroke="#a01010" />
      <rect x={3651} y={1177} width={340} height={10} fill="#3f0000" stroke="#a01010" />
      <rect x={3651} y={1187} width={340} height={56} fill="#6c0000" stroke="#a01010" />
      <path d="M2746 1005H3992" stroke="#8a8a8a" strokeWidth={1} />
      {TPOS.map(({ x, dark, cols }) =>
        cols.map((ranges, c) =>
          ranges.filter((_, i) => i % 2 === 0).map((from, i) => {
            const to = ranges[i * 2 + 1];
            const a = Math.max(from, dark[0]);
            const b = Math.min(to, dark[1]);
            return (
              <g key={`${x}-${c}-${i}`} strokeWidth={2} strokeDasharray="2 1">
                <path d={`M${x + c * 6} ${from}V${to}`} stroke="#8c8c94" />
                {b > a && <path d={`M${x + c * 6} ${a}V${b}`} stroke="#1c1c1c" strokeOpacity={0.55} strokeDasharray="none" />}
              </g>
            );
          })
        )
      )}
      <g strokeWidth={2} stroke="#f4ec4a">
        {YELLOW.map(([a, b, ly], i) => <path key={i} d={`M${a} ${ly}H${b}`} />)}
      </g>
      <g strokeWidth={1} stroke="#a02020">
        {REDS.map(([a, b, ly], i) => <path key={i} d={`M${a} ${ly}H${b}`} />)}
      </g>
      <g strokeWidth={1} stroke="#5f8fc4">
        {BLUES.map(([a, b, ly], i) => <path key={i} d={`M${a} ${ly}H${b}`} />)}
      </g>
      {PROFILES.map(p => <VolumeProfile key={p.x} profile={p} />)}
      {OPENINGS.map(([x, a, b, c, d]) => (
        <g key={x}>
          <rect x={x} y={a} width={2} height={b - a} fill="#ef7d12" />
          <rect x={x + 3} y={c} width={2} height={d - c} fill="#8b1a1a" />
        </g>
      ))}
      <rect x={2745} y={1714} width={2} height={40} fill="#8b1a1a" />
      {MARKERS.map(([x, my]) => <path key={x} d={`M${x - 2} ${my}l4 -3v6z`} fill="#e01ee0" />)}
      <path d="M3651 1177H3992" stroke="#0f8a0f" strokeWidth={3} />
      <path d="M3651 1636H3992" stroke="#e81010" strokeWidth={3} />
      <path d="M3981 252V2034" stroke="#6a6a6a" strokeWidth={1} />
      <path d="M2745 2034H3992V252" fill="none" stroke="#fff" strokeWidth={1} />
      {Array.from({ length: 20 }, (_, i) => 5230 - i * 10).map(p => (
        <g key={p}>
          <rect x={3992} y={y(p)} width={4} height={1} fill="#fff" />
          <text x={3998} y={y(p) + 7} fill="#f2f2f2">{p.toFixed(2)}</text>
        </g>
      ))}
      <PriceTag x={3996} y={860} w={73} h={30} bg="#ff0" fg="#333" text="5170.00" />
      <PriceTag x={3996} y={874} w={73} h={30} bg="#fff" fg="#111" text="5168.50" />
      <PriceTag x={3996} y={952} w={73} h={30} bg="#c40000" fg="#300" text="5159.75" />
      <PriceTag x={3996} y={982} w={73} h={30} bg="#ff0" fg="#333" text="5156.25" />
      <PriceTag x={3996} y={1005} w={73} h={30} bg="#fff" fg="#111" text="5153.75" />
      <PriceTag x={3996} y={1469} w={73} h={30} bg="#c40000" fg="#300" text="5101.75" />
      <PriceTag x={3996} y={1588} w={73} h={30} bg="#ff0" fg="#333" text="5088.50" />
      {DAYS.map(([x, label]) => (
        <g key={x}>
          <rect x={x} y={2034} width={1} height={35} fill="#fff" />
          <rect x={x + 2} y={2038} width={33} height={30} fill="#fff" />
          <text x={x + 3} y={2061} fill="#111">{label}</text>
        </g>
      ))}
      <rect x={3860} y={2039} width={218} height={28} fill="#fff" />
      <text x={3871} y={2060} fill="#111">{'Fri 2024-03-08\u00a0\u00a007:40:45'}</text>
    </svg>
  );
};

/* ---------- quote board ---------- */

const QUOTES = [
  ['ESH4.CME', '150', '5159.25', '5179.00', '5141.50', '3424'],
  ['NQH4.CME', '657', '18279.00', '18375.25', '18211.00', '1553'],
  ['YMH4.CBOT', '233', '38847', '38863', '38630', '3981'],
  ['GCJ4.COMEX', '315', '2166.6', '2192.7', '2161.2', '1424'],
  ['CLJ4.NYMEX', '180', '79.51', '79.99', '78.19', '1258'],
  ['6EH4.CME', '127', '1.09525', '1.09850', '1.09215', '1712'],
];

const QuoteBoard: React.FC = () => (
  <section className="flex flex-col min-h-0 min-w-0 border border-[#8a8a8a] bg-white">
    <header className="h-[60px] shrink-0 flex items-center pl-3">
      <WindowIcon />
      <h2 className="ml-[6px] flex-1 text-[23px] text-[#8f8f8f]">Quote Board - L:1</h2>
      <div className="flex text-[#808080]">
        <button aria-label="Minimize quote board" className="w-[92px] flex justify-center"><Minus size={28} strokeWidth={1.5} /></button>
        <button aria-label="Maximize quote board" className="w-[92px] flex justify-center"><Square size={24} strokeWidth={1.5} /></button>
        <button aria-label="Close quote board" className="w-[92px] flex justify-center"><X size={28} strokeWidth={1.5} /></button>
      </div>
    </header>
    <nav className="h-[37px] shrink-0 flex items-center gap-4 px-2 text-[22px] text-[#6d6d6d]">
      <button>File</button>
      <button>Settings</button>
      <button>Alerts</button>
      <button>Symbols</button>
    </nav>
    <div className="flex-1 min-h-0 mx-px border-t border-[#6d6d6d] bg-black overflow-hidden">
      <table className="w-full table-fixed border-collapse text-[22px] leading-[30px] text-white whitespace-nowrap">
        <colgroup>
          <col className="w-[187px]" />
          <col className="w-[190px]" />
          <col className="w-[120px]" />
          <col className="w-[120px]" />
          <col className="w-[135px]" />
          <col />
        </colgroup>
        <thead>
          <tr className="h-[42px] bg-[#a0a0a0] text-left text-black">
            {['Symbol', 'DailyRange/Ticks', 'Open', 'High', 'Low', 'Volum'].map(h => (
              <th key={h} className="p-0 pl-[5px] font-normal overflow-hidden">{h}</th>
            ))}
          </tr>
        </thead>
        <tbody>
          {QUOTES.map((q, r) => (
            <tr key={q[0]} className="h-9 text-center">
              {q.map((v, c) => (
                <td
                  key={c}
                  className={`p-0 border border-[#f0f0f0] overflow-hidden ${c === 5 ? 'text-right' : ''} ${r === 0 && c === 0 ? 'bg-[#ffa500] border-[#3fcf3f]' : ''}`}
                >
                  {v}
                </td>
              ))}
            </tr>
          ))}
        </tbody>
      </table>
    </div>
    <ScrollBar height="h-[34px]" thumb="start" />
  </section>
);

/* ---------- trading ladder ---------- */

const LADDER_VOLUME = [2569, 3363, 2915, 2494, 3347, 2447, 1960, 2148, 1912, 1503, 1158, 1310, 1566, 1375, 1426, 1996, 2762, 4596, 4394, 4314, 7572, 6983, 6648, 6328, 7633, 8025, 7084, 6200, 6414, 3959, 2697, 2174, 8657, 5368, 5127, 3573, 2149, 2609, 2543, 2729, 3119];
const PULLED: Record<number, number> = { 0: 23, 2: 13, 3: 13, 4: 3, 5: 34, 6: 73, 7: 12, 8: 31, 9: 31, 10: 39, 11: 3, 12: 18, 13: 31, 14: 15, 15: 11, 16: 13, 17: 20, 20: 1, 22: 5, 23: 2 };
const STACKED: Record<number, number> = { 3: 1, 4: 20, 5: 6, 6: 10, 7: 1, 9: 2, 10: 1, 12: 16, 16: 1, 19: 26, 20: 12, 21: 65, 22: 43 };
const BIDS: Record<number, number> = { 19: 36, 20: 65, 21: 77, 22: 82, 23: 73, 24: 85, 25: 87, 26: 117, 27: 115, 28: 114, 29: 851 };
const ASKS: Record<number, number> = { 8: 871, 9: 79, 10: 92, 11: 130, 12: 164, 13: 124, 14: 72, 15: 65, 16: 67, 17: 45, 18: 33 };

const Ladder: React.FC = () => (
  <table className="w-full h-full table-fixed border-collapse bg-[#262626] text-[22px] leading-[30px]">
    <colgroup>
      <col />
      <col className="w-[65px]" />
      <col className="w-[65px]" />
      <col className="w-[64px]" />
      <col className="w-[65px]" />
      <col className="w-[65px]" />
      <col className="w-[127px]" />
    </colgroup>
    <tbody>
      <tr className="h-[33px] text-white">
        <th className="p-0 pl-[6px] font-normal text-left">
          <div className="flex gap-4 overflow-hidden whitespace-nowrap">
            ESH4.CME <span className="bg-white text-black px-px">Qty: 2</span> TA: 4PROP-UC
          </div>
        </th>
        <th className="p-0" />
        <th scope="col" rowSpan={2} className="p-0 pt-3 align-top font-normal bg-[#284a68] text-[#80ff80] border-x border-[#808080]">Buy</th>
        <th className="p-0" />
        <th className="p-0" />
        <th scope="col" rowSpan={2} className="p-0 pt-3 align-top font-normal bg-[#600000] text-[#ff7070] border-x border-[#808080]">Sell</th>
        <th className="p-0" />
      </tr>
      {LADDER_VOLUME.map((v, i) => {
        const price = (5173 - i * 0.25).toFixed(2);
        // the first row slides under the column headings
        const cut = i === 0 ? 'h-[19px] overflow-hidden flex flex-col justify-end' : '';
        const align = i === 0 ? 'align-bottom' : 'align-middle';
        const bid = BIDS[i];
        const ask = ASKS[i];
        return (
          <tr key={price} className="h-[34px]">
            <td className="p-0 relative text-right text-[17px] text-white">
              <div
                className={`absolute inset-y-0 right-0 ${i === 32 ? 'bg-[#800000]' : 'bg-[#909090] border-2 border-b-0 border-black'}`}
                style={{ width: `${(v / 8657) * 84}%` }}
              />
              <span className="relative pr-[5px]">{v}</span>
            </td>
            <td className={`p-0 pr-5 text-right text-[#a0a0a0] ${i === 18 ? 'bg-black' : ''}`}>{i === 18 ? '18' : ''}</td>
            {i > 0 && (
              <td className="p-0 relative text-right bg-[#284a68] border-x border-t border-x-[#808080] border-t-[#14293d]">
                {bid < 800 && <div className="absolute inset-y-0 left-0 bg-[#5b9bd5]" style={{ width: `${bid * 0.42}%` }} />}
                <span className={`relative pr-2 ${bid > 800 ? 'text-[#e8d020]' : 'text-white'}`}>{bid}</span>
              </td>
            )}
            <td className={`p-0 text-center text-[#e01818] ${align}`}><div className={cut}>{PULLED[i]}</div></td>
            <td className="p-0 text-center text-[#1878d8]">{STACKED[i]}</td>
            {i > 0 && (
              <td className="p-0 relative text-left bg-[#600000] border-x border-t border-x-[#808080] border-t-[#3a1414]">
                {ask < 800 && <div className="absolute inset-y-0 right-0 bg-[#c80000]" style={{ width: `${ask * 0.42}%` }} />}
                <span className={`relative pl-[6px] ${ask > 800 ? 'text-[#e8d020]' : 'text-white'}`}>{ask}</span>
              </td>
            )}
            <td className={`p-0 pr-6 text-right ${align} ${i === 18 ? 'bg-black text-[#e00000]' : 'text-[#858585]'}`}>
              <div className={cut}>{price}</div>
            </td>
          </tr>
        );
      })}
    </tbody>
  </table>
);

/* ---------- page ---------- */

const App: React.FC = () => (
  <div className="h-screen flex flex-col overflow-hidden bg-[#f0f0f0] font-['Open_Sans','Noto_Sans',sans-serif] text-black">
    <TitleBar />
    <nav className="h-[34px] shrink-0 flex items-center gap-4 px-2 bg-white text-[22px] text-[#6d6d6d]">
      {MENU.map(item => <button key={item}>{item}</button>)}
    </nav>
    <Toolbar />
    <div className="h-[41px] shrink-0 flex pb-[2px]">
      <button className="w-[206px] bg-[#0078d7] text-white text-[22px] whitespace-nowrap">Trading workspace</button>
    </div>

    <main className="flex-1 min-h-0 grid grid-cols-[minmax(0,1902fr)_minmax(0,829fr)_minmax(0,1365fr)] border-t border-[#6d6d6d] bg-[#ababab]">
      <div className="min-h-0 grid grid-rows-[minmax(0,1134fr)_minmax(0,791fr)]">
        <ChartWindow title={'ESH4.CME  1 Min  #1 L:1 | E-Mini S&P 500 - CME (Mar24)'} pad="pl-[10px] pr-3 pb-[15px]" className="mr-[3px]">
          <MinuteChart />
          <div className="absolute top-px left-[2px] right-[87px] overflow-hidden whitespace-pre text-[20px] leading-[30px] text-white">
            <div className="flex">
              <span className="bg-[#808080] text-[#e0e0e0] px-px">Trade: 2@5153.75 </span>
              <span className="mr-1">ESH4.CME  1 Min  #1</span>
              <span className="bg-white text-black px-px mr-1">C: 5168.50</span>
              <span className="bg-[#f00] text-[#400] px-px mr-1">Chg: -0.25</span>
              <span className="bg-[#00c000] text-[#032] px-px mr-1">DChg: 6.75</span>
              <span className="mr-1">2024-03-08 15:16:17</span>
              <span className="bg-white text-black px-px mr-1">TR: 43s</span>
              <span>{'CountDown Timer   (20, 90, No, No, No, No, No, No, No, No, Yes)  Volume Weighted Average Price'}</span>
            </div>
            <span className="inline-block bg-[#808080] text-[#f0f0f0] px-px">DPL: 0.00P</span>
          </div>
          <ScrollBar height="h-[34px]" thumb="end" />
        </ChartWindow>
        <ChartWindow title={'Footprint ESH4.CME  1 Min  #12 L:1 | E-Mini S&P 500 - CME (Mar24)'} pad="pl-[10px] pr-3">
          <FootprintChart />
          <div className="absolute top-px left-0 whitespace-pre text-[13px] leading-4 text-[#b4b4b4]">
            <div className="flex">
              <span className="bg-[#808080] text-[#c4c4c4] px-px">Trade: 1@18351.25 </span>
              <span className="mr-[2px]">ESH4.CME  1 Min  #12</span>
              <span className="bg-[#c0c0c0] text-[#222] mr-px">C: 5168.50</span>
              <span className="bg-[#f00] text-[#700] mr-px">Chg: -0.25</span>
              <span className="bg-[#00c000] text-[#032] mr-[2px]">DChg: 6.75</span>
              <span className="mr-[2px]">2024-03-08 15:16:17</span>
              <span className="bg-[#c0c0c0] text-[#222] mr-[2px]">TR: 43s</span>
              <span>Numbers Bars</span>
            </div>
            <span className="inline-block bg-[#808080] text-[#c4c4c4] px-px">DPL: 0.00P</span>
          </div>
          <ScrollBar height="h-[30px]" thumb="end" />
        </ChartWindow>
      </div>

      <div className="min-h-0 grid grid-rows-[minmax(0,397fr)_minmax(0,1528fr)]">
        <QuoteBoard />
        <ChartWindow title="1 ESH4.CME #3 L:1 | E-Mini S&P 500 - CME (Mar24)" pad="pl-3 pr-[13px] pb-[14px]">
          <Ladder />
        </ChartWindow>
      </div>

      <ChartWindow title="ESH4.CME #4 L:1 | E-Mini S&P 500 - CME (Mar24) (GCJ4.COMEX #4 - Period: 1 Days, TPOs: 0.1 x 30 ..." pad="pl-3 pr-4 pb-[14px]">
        <ProfileChart />
        <div className="absolute top-[2px] left-1 right-[86px] flex overflow-hidden whitespace-pre text-[20px] leading-[30px] text-white">
          <span className="mr-4">ESH4.CME #4 - Period: 1 Days, TPOs: 0.25 x 30 min</span>
          <span className="bg-white text-black px-px mr-1">C: 5168.50</span>
          <span className="bg-white text-black px-px mr-1">Chg: 0.00</span>
          <span className="bg-[#00c000] text-[#032] px-px mr-1">DChg: 6.75</span>
          <span className="mr-1">2024-03-08 15:16:17</span>
          <span className="bg-white text-black px-px mr-1">TR: 13m 43s</span>
          <span>VbP for TPO Chart</span>
        </div>
        <ScrollBar height="h-[34px]" thumb="end" />
      </ChartWindow>
    </main>

    <footer className="h-[41px] shrink-0 flex border-t border-white bg-[#f0f0f0] text-[22px] whitespace-pre">
      <button className="w-[269px] bg-[#0078d7] text-white">{'ESH4.CME  1 Min  #1 L:1'}</button>
      <button className="w-[22px] border-r border-[#a0a0a0]">1</button>
      <button className="w-[187px] border-r border-[#a0a0a0]">ESH4.CME #4 L:1</button>
      <button className="w-[106px] border-r border-[#a0a0a0]">Footprint</button>
    </footer>
  </div>
);

export default App;
